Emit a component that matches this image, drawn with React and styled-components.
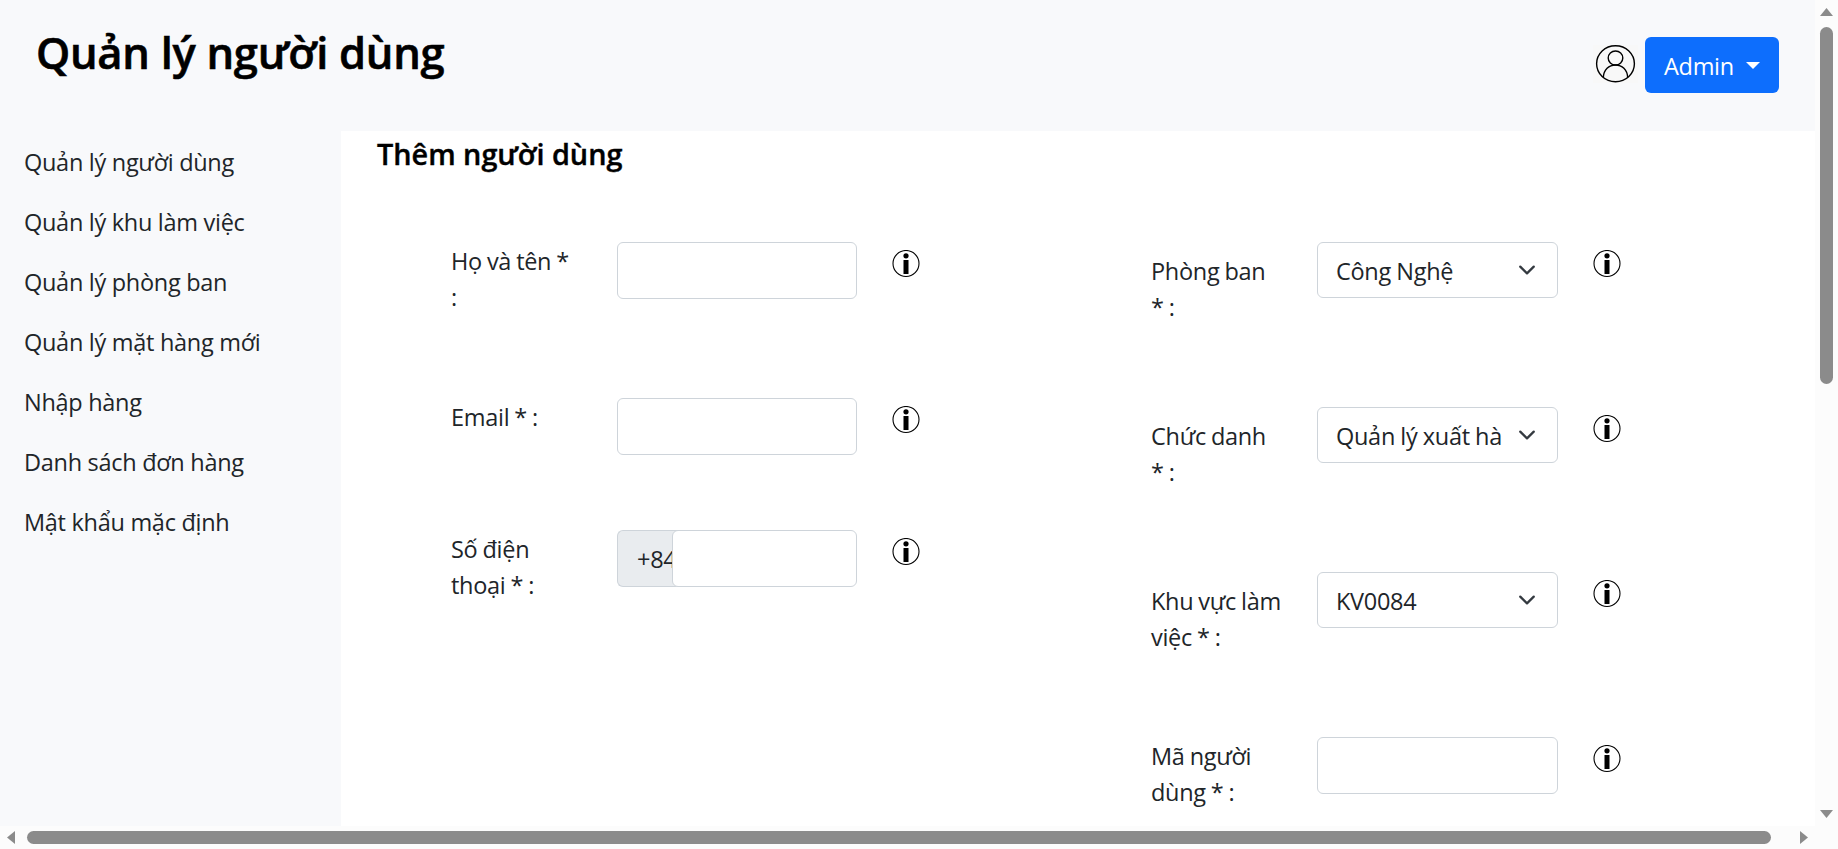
import React from 'react';
import styled, { createGlobalStyle } from 'styled-components';

const GlobalStyle = createGlobalStyle`
  * { box-sizing: border-box; }
  body {
    margin: 0;
    overflow: hidden;
    background: #fff;
    color: #212529;
    font: 400 23.5px/36px "Open Sans", "Noto Sans", sans-serif;
    letter-spacing: -0.29px;
  }
`;

const Frame = styled.div`
  display: grid;
  grid-template: 826px 23px / 1815px 23px;
  background: #fcfcfc;
`;

const Viewport = styled.div`
  display: flex;
  flex-direction: column;
  overflow: hidden;
  background: #fff;
`;

const Header = styled.header`
  display: flex;
  flex: none;
  justify-content: space-between;
  align-items: flex-start;
  height: 131px;
  padding: 27px 36px 0;
  background: #f8f9fb;
`;

const PageTitle = styled.h1`
  margin: 0;
  color: #000;
  font-size: 43.5px;
  font-weight: 600;
  line-height: 52px;
  letter-spacing: -0.28px;
  -webkit-text-stroke: 0.6px #000;
`;

const Account = styled.div`
  display: flex;
  align-items: flex-start;
  gap: 7px;
  padding-top: 10px;
`;

const AvatarBox = styled.div`
  width: 45px;
  height: 38px;
  margin-top: 8px;
  background: #f8f8f8;

  svg { display: block; }
`;

const AdminButton = styled.button`
  display: flex;
  align-items: center;
  width: 134px;
  height: 56px;
  padding: 2px 19px 0;
  border: 0;
  border-radius: 6px;
  background: #0d6efd;
  color: #fff;
  font: inherit;
  letter-spacing: inherit;

  &::after {
    content: "";
    margin: 0 0 1px auto;
    border: 7px solid transparent;
    border-top-color: #fff;
    border-bottom: 0;
  }
`;

const Body = styled.div`
  display: flex;
  flex: 1;
  min-height: 0;
`;

const Sidebar = styled.nav`
  flex: none;
  width: 341px;
  padding: 1px 24px;
  background: #f8f9fb;
`;

const NavLink = styled.a`
  display: block;
  padding: 12px 0;
  color: inherit;
  white-space: nowrap;
`;

const Main = styled.main`
  flex: 1;
  padding: 5px 0 0 36px;
`;

const SectionTitle = styled.h2`
  margin: 0 0 70px;
  color: #000;
  font-size: 28.8px;
  font-weight: 600;
  line-height: 36px;
  letter-spacing: 0;
  -webkit-text-stroke: 0.4px #000;
`;

const Form = styled.form`
  display: grid;
  grid-template-columns: 700px 1fr;
  padding-left: 73px;
`;

const Column = styled.div`
  display: flex;
  flex-direction: column;
`;

const Field = styled.div`
  display: flex;
  align-items: flex-start;
  height: ${(p) => p.$height}px;

  svg { flex: none; }
`;

const Label = styled.label`
  width: 167px;
  padding: ${(p) => (p.$low ? 11 : 1)}px 0 0 1px;
  white-space: pre-line;
  word-spacing: -0.8px;
`;

const TextInput = styled.input`
  width: ${(p) => p.$width || 240}px;
  height: 57px;
  margin: 0;
  padding: 0 18px;
  border: 1px solid #ced4da;
  border-radius: 6px;
  background: #fff;
  font: inherit;
  outline: none;
`;

const SelectBox = styled.div`
  display: flex;
  align-items: center;
  justify-content: space-between;
  width: 241px;
  height: 56px;
  padding: 0 21px 0 18px;
  border: 1px solid #ced4da;
  border-radius: 6px;
  background: #fff;
`;

const SelectValue = styled.span`
  padding-top: 2px;
  white-space: nowrap;
  word-spacing: -0.5px;
`;

const PhoneGroup = styled.div`
  display: flex;
  width: 240px;
  height: 57px;
`;

const Prefix = styled.span`
  width: 62px;
  margin-right: -7px;
  padding: 10px 0 0 19px;
  overflow: hidden;
  border: 1px solid #ced4da;
  border-right: 0;
  border-radius: 6px 0 0 6px;
  background: #e9ecef;
  white-space: nowrap;
`;

const InfoMark = styled.svg`
  margin: 8px 0 0 35px;
`;

const VerticalBar = styled.div`
  display: flex;
  flex-direction: column;
  align-items: center;
  padding: 8px 0;
`;

const HorizontalBar = styled.div`
  display: flex;
  align-items: center;
  padding: 0 7px;
`;

const Thumb = styled.div`
  width: ${(p) => p.$w}px;
  height: ${(p) => p.$h}px;
  margin: ${(p) => p.$margin};
  border-radius: 7px;
  background: #8b8b8b;
`;

function Arrow({ points, width, height }) {
  return (
    <svg width={width} height={height} viewBox={`0 0 ${width} ${height}`}>
      <polygon points={points} fill="#8b8b8b" />
    </svg>
  );
}

function InfoIcon() {
  return (
    <InfoMark width="28" height="28" viewBox="0 0 28 28">
      <circle cx="14" cy="13.5" r="13" fill="none" stroke="#000" strokeWidth="1.1" />
      <circle cx="14" cy="5.8" r="2.6" />
      <rect x="11.5" y="10" width="5" height="14" />
    </InfoMark>
  );
}

function Avatar() {
  return (
    <AvatarBox>
      <svg width="45" height="38" viewBox="0 0 45 38" fill="none" stroke="#000" strokeWidth="1.4">
        <ellipse cx="22.5" cy="18.7" rx="18.9" ry="18" />
        <ellipse cx="22.5" cy="13" rx="7.3" ry="7" />
        <path d="M10.3 32.4C10.8 24.8 15.8 20 22.5 20S34.2 24.8 34.7 32.4" />
      </svg>
    </AvatarBox>
  );
}

function Select({ value }) {
  return (
    <SelectBox>
      <SelectValue>{value}</SelectValue>
      <svg width="18" height="18" viewBox="0 0 16 16" fill="none" stroke="#343a40" strokeWidth="2" strokeLinecap="round" strokeLinejoin="round">
        <path d="m2 5 6 6 6-6" />
      </svg>
    </SelectBox>
  );
}

const links = [
  'Quản lý người dùng',
  'Quản lý khu làm việc',
  'Quản lý phòng ban',
  'Quản lý mặt hàng mới',
  'Nhập hàng',
  'Danh sách đơn hàng',
  'Mật khẩu mặc định',
];

const selects = [
  { label: 'Phòng ban\n* :', value: 'Công Nghệ' },
  { label: 'Chức danh\n* :', value: 'Quản lý xuất hà' },
  { label: 'Khu vực làm\nviệc * :', value: 'KV0084' },
];

export default function App() {
  return (
    <>
      <GlobalStyle />
      <Frame>
        <Viewport>
          <Header>
            <PageTitle>Quản lý người dùng</PageTitle>
            <Account>
              <Avatar />
              <AdminButton type="button">Admin</AdminButton>
            </Account>
          </Header>
          <Body>
            <Sidebar>
              {links.map((text) => (
                <NavLink key={text}>{text}</NavLink>
              ))}
            </Sidebar>
            <Main>
              <SectionTitle>Thêm người dùng</SectionTitle>
              <Form>
                <Column>
                  <Field $height={156}>
                    <Label>{'Họ và tên *\n:'}</Label>
                    <TextInput />
                    <InfoIcon />
                  </Field>
                  <Field $height={132}>
                    <Label>Email * :</Label>
                    <TextInput />
                    <InfoIcon />
                  </Field>
                  <Field $height={132}>
                    <Label>{'Số điện\nthoại * :'}</Label>
                    <PhoneGroup>
                      <Prefix>+84</Prefix>
                      <TextInput $width={185} />
                    </PhoneGroup>
                    <InfoIcon />
                  </Field>
                </Column>
                <Column>
                  {selects.map(({ label, value }) => (
                    <Field key={value} $height={165}>
                      <Label $low>{label}</Label>
                      <Select value={value} />
                      <InfoIcon />
                    </Field>
                  ))}
                  <Field $height={165}>
                    <Label>{'Mã người\ndùng * :'}</Label>
                    <TextInput $width={241} />
                    <InfoIcon />
                  </Field>
                </Column>
              </Form>
            </Main>
          </Body>
        </Viewport>
        <VerticalBar>
          <Arrow points="0,8 6.5,0 13,8" width={13} height={8} />
          <Thumb $w={13} $h={357} $margin="11px 0 auto" />
          <Arrow points="0,0 13,0 6.5,8" width={13} height={8} />
        </VerticalBar>
        <HorizontalBar>
          <Arrow points="8,0 0,6.5 8,13" width={8} height={13} />
          <Thumb $w={1744} $h={13} $margin="0 auto 0 12px" />
          <Arrow points="0,0 8,6.5 0,13" width={8} height={13} />
        </HorizontalBar>
      </Frame>
    </>
  );
}
